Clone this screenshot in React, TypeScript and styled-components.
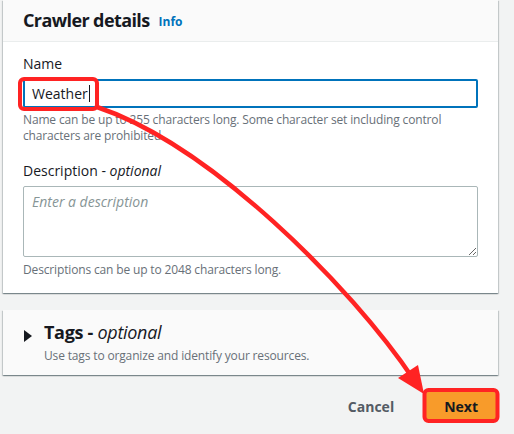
import React from "react";
import styled, { createGlobalStyle } from "styled-components";

const Global = createGlobalStyle`
  html, body { margin: 0; padding: 0; background: #f2f3f3; }
  body { font-family: "Open Sans", "Noto Sans", Arial, sans-serif; color: #16191f; }
  * { box-sizing: border-box; }
`;

const Page = styled.div`
  position: relative;
  width: 514px;
  height: 434px;
  overflow: hidden;
  padding-left: 3px;
`;

const Card = styled.section<{ $tone?: string }>`
  width: 495px;
  background: ${(p) => p.$tone || "#ffffff"};
  box-shadow: 0 1px 1px 0 rgba(0, 28, 36, 0.3), 1px 1px 1px 0 rgba(0, 28, 36, 0.15),
    -1px 1px 1px 0 rgba(0, 28, 36, 0.15);
`;

const CardHeader = styled.header`
  height: 42px;
  display: flex;
  align-items: center;
  gap: 9px;
  padding: 0 20px 2px;
  background: #fafafa;
  border-bottom: 1px solid #eaeded;
`;

const Title = styled.h2`
  margin: 0;
  font-size: 18px;
  line-height: 22px;
  font-weight: 700;
  letter-spacing: -0.6px;
`;

const InfoLink = styled.a`
  font-size: 12px;
  font-weight: 700;
  color: #0073bb;
  text-decoration: none;
  margin-top: 3px;
`;

const CardBody = styled.div`
  padding: 11px 20px 15px;
  display: flex;
  flex-direction: column;
`;

const Field = styled.div<{ $gap?: number }>`
  display: flex;
  flex-direction: column;
  margin-top: ${(p) => p.$gap || 0}px;
`;

const Label = styled.label`
  font-size: 14px;
  line-height: 22px;
  margin-bottom: 4px;
  em { font-style: italic; }
`;

const InputBox = styled.div`
  height: 29px;
  border: 2px solid #0073bb;
  border-radius: 2px;
  display: flex;
  align-items: center;
  padding-left: 7px;
  font-size: 14px;
`;

const Caret = styled.span`
  display: inline-block;
  width: 1px;
  height: 17px;
  background: #16191f;
  margin-left: 1px;
`;

const TextArea = styled.textarea`
  height: 71px;
  resize: vertical;
  border: 1px solid #aab7b8;
  border-radius: 2px;
  padding: 4px 8px;
  font-family: inherit;
  font-size: 14px;
  line-height: 22px;
  color: #16191f;
  &::placeholder { color: #879596; font-style: italic; }
`;

const Hint = styled.p<{ $top?: number }>`
  margin: ${(p) => p.$top || 4}px 0 0;
  font-size: 12px;
  line-height: 16px;
  color: #687078;
  letter-spacing: -0.15px;
`;

const Expander = styled.div`
  display: flex;
  gap: 12px;
  padding: 10px 20px 11px 21px;
`;

const Triangle = styled.span`
  width: 0;
  height: 0;
  margin-top: 10px;
  border-top: 6px solid transparent;
  border-bottom: 6px solid transparent;
  border-left: 8px solid #16191f;
`;

const ExpanderText = styled.div`
  display: flex;
  flex-direction: column;
`;

const ExpanderTitle = styled.h3`
  margin: 0;
  font-size: 18px;
  line-height: 24px;
  font-weight: 700;
  letter-spacing: -0.3px;
  em { font-weight: 400; font-style: italic; }
`;

const Footer = styled.div`
  width: 495px;
  display: flex;
  justify-content: flex-end;
  align-items: center;
  gap: 32px;
  padding: 17px 2px 0 0;
`;

const Button = styled.button<{ $primary?: boolean }>`
  height: 28px;
  padding: 0 ${(p) => (p.$primary ? 18 : 0)}px;
  min-width: ${(p) => (p.$primary ? 69 : 0)}px;
  border: none;
  border-radius: 2px;
  background: ${(p) => (p.$primary ? "#f89b2a" : "transparent")};
  color: ${(p) => (p.$primary ? "#16191f" : "#545b64")};
  font-family: inherit;
  font-size: 14px;
  font-weight: 700;
`;

const Overlay = styled.svg`
  position: absolute;
  left: 0;
  top: 0;
  pointer-events: none;
`;

export default function App() {
  return (
    <>
      <Global />
      <Page>
        <Card>
          <CardHeader>
            <Title>Crawler details</Title>
            <InfoLink href="#">Info</InfoLink>
          </CardHeader>
          <CardBody>
            <Field>
              <Label>Name</Label>
              <InputBox>
                Weather
                <Caret />
              </InputBox>
              <Hint>
                Name can be up to 255 characters long. Some character set including control characters are
                prohibited.
              </Hint>
            </Field>
            <Field $gap={16}>
              <Label>
                Description - <em>optional</em>
              </Label>
              <TextArea placeholder="Enter a description" />
              <Hint $top={5}>Descriptions can be up to 2048 characters long.</Hint>
            </Field>
          </CardBody>
        </Card>
        <div style={{ height: 17 }} />
        <Card $tone="#fafafa">
          <Expander>
            <Triangle />
            <ExpanderText>
              <ExpanderTitle>
                Tags - <em>optional</em>
              </ExpanderTitle>
              <Hint $top={0}>Use tags to organize and identify your resources.</Hint>
            </ExpanderText>
          </Expander>
        </Card>
        <Footer>
          <Button>Cancel</Button>
          <Button $primary>Next</Button>
        </Footer>
        <Overlay width="514" height="434" viewBox="0 0 514 434">
          <rect x="20" y="79" width="77" height="30" rx="4" fill="none" stroke="#ff2323" strokeWidth="4" />
          <rect x="424.5" y="390" width="73" height="31" rx="4" fill="none" stroke="#ff2323" strokeWidth="4" />
          <path d="M97 107 C 210 145 350 285 414 380" fill="none" stroke="#ff2323" strokeWidth="4.5" />
          <polygon points="424,394 398,378 418,365" fill="#ff2323" />
        </Overlay>
      </Page>
    </>
  );
}
